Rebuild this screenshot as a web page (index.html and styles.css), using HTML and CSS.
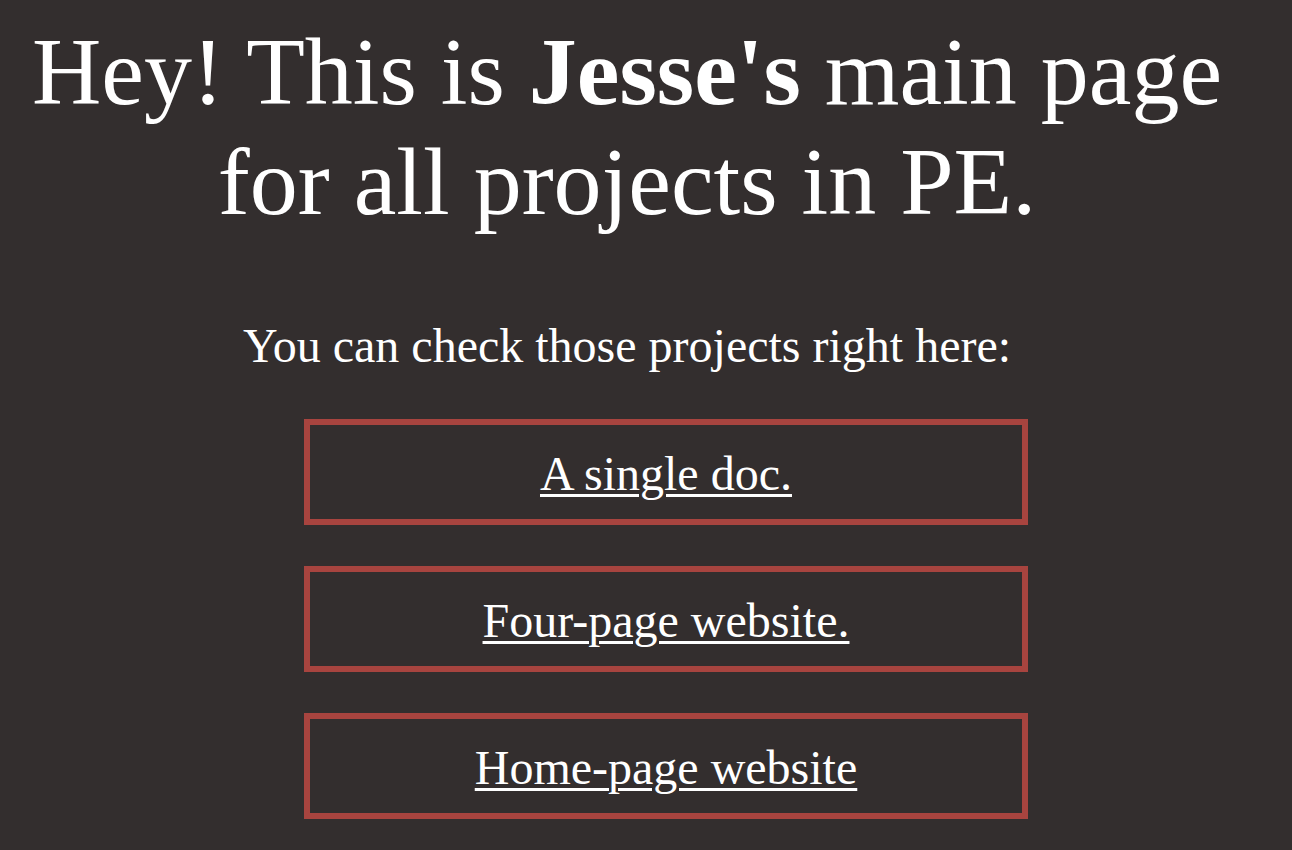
FILE: index.html
```html
<!DOCTYPE html>
<html lang="en">
<head>
<meta charset="utf-8">
<title>Jesse's main page</title>
<link rel="stylesheet" href="styles.css">
</head>
<body>
<header class="intro">
  <h1 class="title">Hey! This is <strong>Jesse's</strong> main page for all projects in PE.</h1>
  <p class="lead">You can check those projects right here:</p>
</header>
<ul class="projects">
  <li class="project"><a href="#">A single doc.</a></li>
  <li class="project"><a href="#">Four-page website.</a></li>
  <li class="project"><a href="#">Home-page website</a></li>
</ul>
</body>
</html>
```
FILE: styles.css
```css
html, body {
  background: #332e2e;
}
body {
  margin: 8px;
  color: #ffffff;
  font-family: "Liberation Serif", "Times New Roman", serif;
}
.intro {
  padding-right: 38px;
  text-align: center;
}
.title {
  margin: 9px 0 0;
  font-size: 96px;
  font-weight: normal;
  line-height: 1.15;
}
.title strong {
  font-weight: bold;
}
.lead {
  margin: 80px 0 0;
  font-size: 48px;
  line-height: 1.15;
}
.projects {
  list-style: none;
  margin: 46px 0 0;
  padding: 0 0 0 40px;
  display: flex;
  flex-direction: column;
  align-items: center;
  gap: 41px;
}
.project {
  box-sizing: border-box;
  width: 724px;
  height: 106px;
  padding-top: 4px;
  border: 6px solid #a8443f;
  display: flex;
  align-items: center;
  justify-content: center;
  font-size: 48px;
}
.project a {
  color: #ffffff;
  text-decoration: underline;
  text-decoration-thickness: 3px;
  text-underline-offset: 4px;
}
```
